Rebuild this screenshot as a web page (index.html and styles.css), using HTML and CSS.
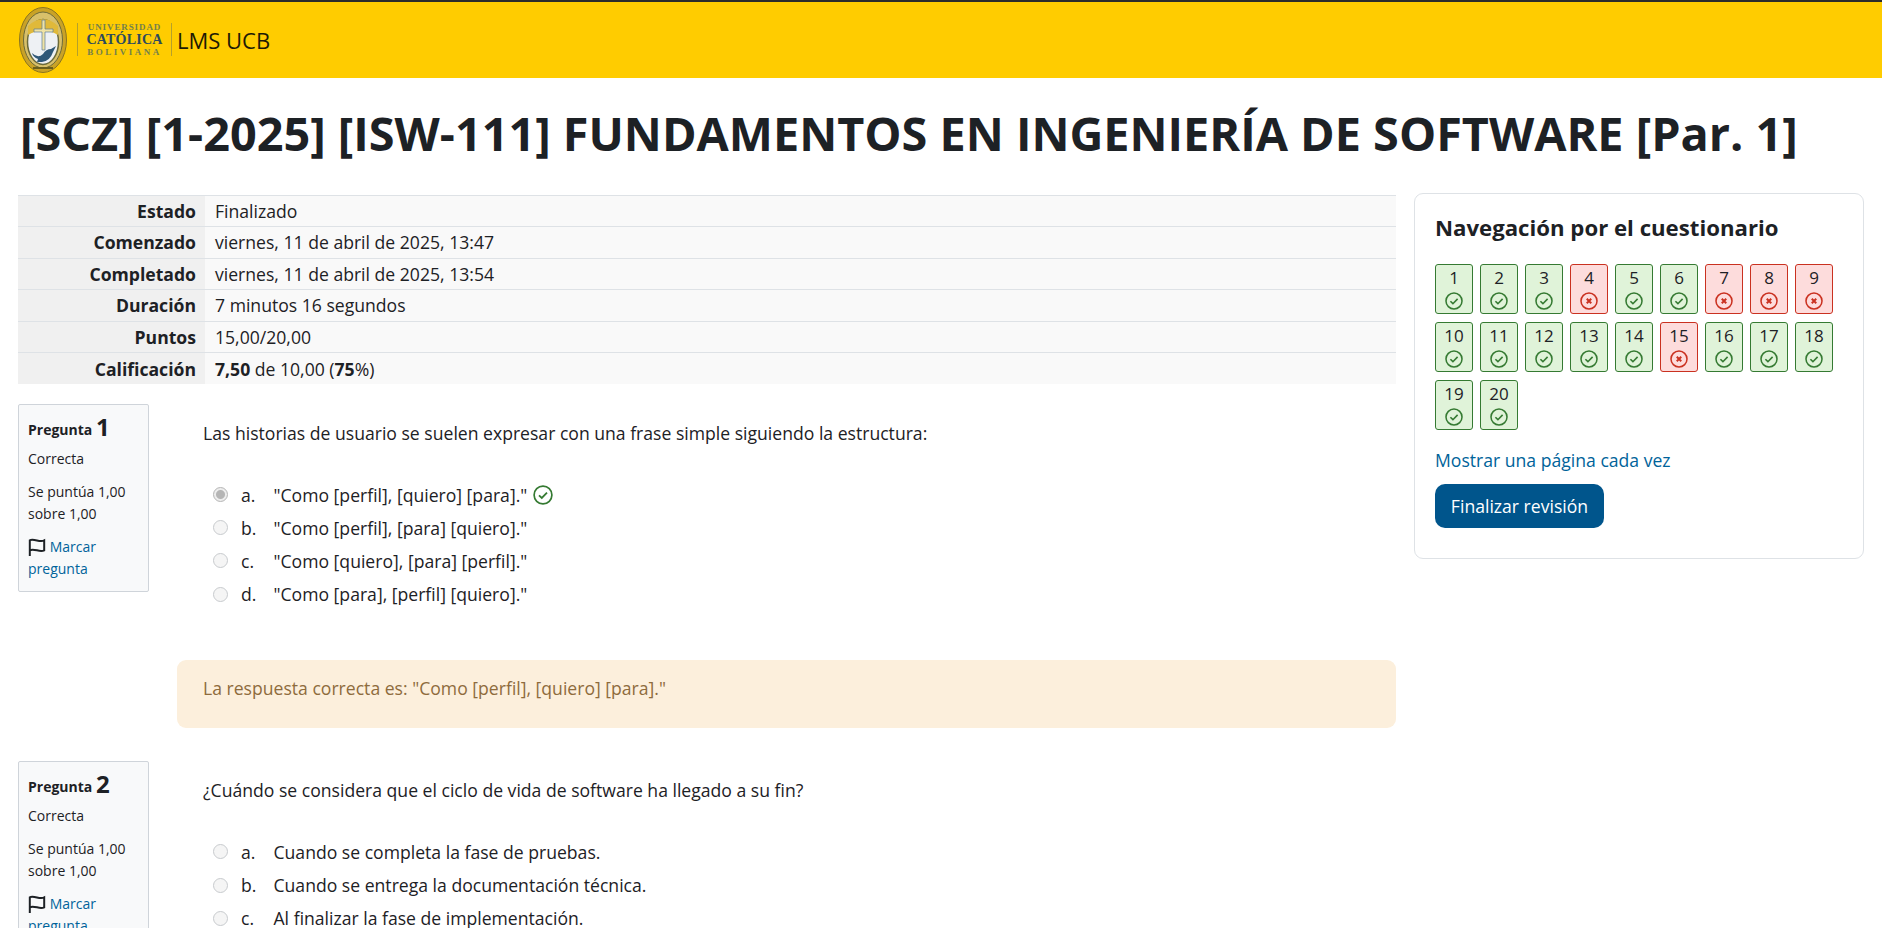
FILE: index.html
```html
<!DOCTYPE html>
<html lang="es">
<head>
  <meta charset="UTF-8">
  <title>LMS UCB</title>
  <link rel="stylesheet" href="styles.css">
</head>
<body>
  <svg class="icon-defs" width="0" height="0">
    <symbol id="ok" viewBox="0 0 20 20">
      <circle cx="10" cy="10" r="8.900" fill="none" stroke="currentColor" stroke-width="1.700"/>
      <path d="M6 10.300l2.800 2.700 5.200-5.300" fill="none" stroke="currentColor" stroke-width="1.800"/>
    </symbol>
    <symbol id="bad" viewBox="0 0 20 20">
      <circle cx="10" cy="10" r="8.900" fill="none" stroke="currentColor" stroke-width="1.700"/>
      <path d="M7.500 7.500l5 5M12.500 7.500l-5 5" fill="none" stroke="currentColor" stroke-width="2.200"/>
    </symbol>
    <symbol id="flag" viewBox="0 0 20 20">
      <path d="M2 20V2.500c2-1.200 4-.8 8 .2s6 1 8 0v11c-2 1-4 1-8 0s-6-1.300-8 0" fill="none" stroke="currentColor" stroke-width="2.200"/>
    </symbol>
  </svg>

  <header class="topbar">
    <svg class="seal" width="48" height="66" viewBox="0 0 48 66">
      <ellipse cx="24" cy="33" rx="23.500" ry="32.500" fill="#c9a227" stroke="#8a7420"/>
      <ellipse cx="24" cy="33" rx="19.500" ry="28" fill="#d8c06a" stroke="#6b6a3a"/>
      <ellipse cx="24" cy="35" rx="15.500" ry="22.500" fill="#eef1f4" stroke="#6b6a3a" stroke-width="1.500"/>
      <path d="M9 28q15-9 30 0V19q-15-14-30 0z" fill="#e0b93a"/>
      <path d="M23 13h3v9h8v3h-8v18h-3V25h-8v-3h8z" fill="#f0e3a4" stroke="#5d7c98" stroke-width=".7"/>
      <path d="M13 46q6 6 11 1 3-5 8-5l5-3-3 6q-3 9-11 10h-5l1-3q-5-2-6-6z" fill="#2f5878"/>
      <path d="M14 61h20" stroke="#6b5f1c" stroke-width="2"/>
    </svg>
    <span class="rule"></span>
    <div class="wordmark">
      <span class="wm-top">UNIVERSIDAD</span>
      <span class="wm-main">CATÓLICA</span>
      <span class="wm-bot">BOLIVIANA</span>
    </div>
    <span class="rule"></span>
    <span class="site-name">LMS UCB</span>
  </header>

  <h1 class="course-title">[SCZ] [1-2025] [ISW-111] FUNDAMENTOS EN INGENIERÍA DE SOFTWARE [Par. 1]</h1>

  <div class="page-grid">
    <main>
      <table class="summary">
        <tr><th>Estado</th><td>Finalizado</td></tr>
        <tr><th>Comenzado</th><td>viernes, 11 de abril de 2025, 13:47</td></tr>
        <tr><th>Completado</th><td>viernes, 11 de abril de 2025, 13:54</td></tr>
        <tr><th>Duración</th><td>7 minutos 16 segundos</td></tr>
        <tr><th>Puntos</th><td>15,00/20,00</td></tr>
        <tr><th>Calificación</th><td><b>7,50</b> de 10,00 (<b>75</b>%)</td></tr>
      </table>

      <section class="question">
        <aside class="q-info">
          <h3>Pregunta <span>1</span></h3>
          <p>Correcta</p>
          <p>Se puntúa 1,00 sobre 1,00</p>
          <a href="#"><svg class="flag"><use href="#flag"/></svg> Marcar pregunta</a>
        </aside>
        <div class="q-body">
          <p class="q-text">Las historias de usuario se suelen expresar con una frase simple siguiendo la estructura:</p>
          <ul class="answers">
            <li><span class="radio checked"></span><span class="letter">a.</span>"Como [perfil], [quiero] [para]."<svg class="ans-ok"><use href="#ok"/></svg></li>
            <li><span class="radio"></span><span class="letter">b.</span>"Como [perfil], [para] [quiero]."</li>
            <li><span class="radio"></span><span class="letter">c.</span>"Como [quiero], [para] [perfil]."</li>
            <li><span class="radio"></span><span class="letter">d.</span>"Como [para], [perfil] [quiero]."</li>
          </ul>
          <div class="feedback">La respuesta correcta es: "Como [perfil], [quiero] [para]."</div>
        </div>
      </section>

      <section class="question">
        <aside class="q-info">
          <h3>Pregunta <span>2</span></h3>
          <p>Correcta</p>
          <p>Se puntúa 1,00 sobre 1,00</p>
          <a href="#"><svg class="flag"><use href="#flag"/></svg> Marcar pregunta</a>
        </aside>
        <div class="q-body">
          <p class="q-text">¿Cuándo se considera que el ciclo de vida de software ha llegado a su fin?</p>
          <ul class="answers">
            <li><span class="radio"></span><span class="letter">a.</span>Cuando se completa la fase de pruebas.</li>
            <li><span class="radio"></span><span class="letter">b.</span>Cuando se entrega la documentación técnica.</li>
            <li><span class="radio"></span><span class="letter">c.</span>Al finalizar la fase de implementación.</li>
          </ul>
        </div>
      </section>
    </main>

    <aside class="nav-card">
      <h3>Navegación por el cuestionario</h3>
      <div class="nav-grid">
        <a class="qn ok">1<svg><use href="#ok"/></svg></a>
        <a class="qn ok">2<svg><use href="#ok"/></svg></a>
        <a class="qn ok">3<svg><use href="#ok"/></svg></a>
        <a class="qn bad">4<svg><use href="#bad"/></svg></a>
        <a class="qn ok">5<svg><use href="#ok"/></svg></a>
        <a class="qn ok">6<svg><use href="#ok"/></svg></a>
        <a class="qn bad">7<svg><use href="#bad"/></svg></a>
        <a class="qn bad">8<svg><use href="#bad"/></svg></a>
        <a class="qn bad">9<svg><use href="#bad"/></svg></a>
        <a class="qn ok">10<svg><use href="#ok"/></svg></a>
        <a class="qn ok">11<svg><use href="#ok"/></svg></a>
        <a class="qn ok">12<svg><use href="#ok"/></svg></a>
        <a class="qn ok">13<svg><use href="#ok"/></svg></a>
        <a class="qn ok">14<svg><use href="#ok"/></svg></a>
        <a class="qn bad">15<svg><use href="#bad"/></svg></a>
        <a class="qn ok">16<svg><use href="#ok"/></svg></a>
        <a class="qn ok">17<svg><use href="#ok"/></svg></a>
        <a class="qn ok">18<svg><use href="#ok"/></svg></a>
        <a class="qn ok">19<svg><use href="#ok"/></svg></a>
        <a class="qn ok">20<svg><use href="#ok"/></svg></a>
      </div>
      <a class="one-page" href="#">Mostrar una página cada vez</a>
      <button class="finish">Finalizar revisión</button>
    </aside>
  </div>
</body>
</html>
```

FILE: styles.css
```css
html, body {
  height: 928px;
  overflow: hidden;
}

body {
  margin: 0;
  font-family: "Open Sans", "Noto Sans", sans-serif;
  font-size: 17.6px;
  color: #1d2125;
  background-color: #fff;
}

a {
  color: #00639a;
  text-decoration: none;
}

.icon-defs {
  display: block;
  height: 0;
}

/* Top bar */
.topbar {
  height: 75.500px;
  background-color: #ffcc00;
  border-top: 2px solid #2b2b2b;
  display: flex;
  align-items: center;
  padding-left: 19px;
}

.seal {
  margin-right: 10px;
  flex: none;
}

.rule {
  width: 1px;
  height: 33px;
  background-color: #b5a02a;
}

.wordmark {
  display: flex;
  flex-direction: column;
  align-items: center;
  width: 93px;
  font-family: "Liberation Serif", serif;
  font-weight: bold;
  line-height: 12px;
}

.wm-top, .wm-bot {
  font-size: 9px;
  letter-spacing: .9px;
  color: #74804c;
}

.wm-bot {
  letter-spacing: 2.500px;
}

.wm-main {
  font-size: 14px;
  letter-spacing: .2px;
  line-height: 13px;
  color: #2c4a5e;
}

.site-name {
  margin-left: 5px;
  font-size: 22px;
  color: #1d1a05;
}

/* Title */
.course-title {
  margin: 0;
  padding: 32px 20px 0;
  height: 81px;
  font-size: 46.800px;
  line-height: 47px;
  font-weight: 700;
  white-space: nowrap;
}

/* Columns */
.page-grid {
  display: grid;
  grid-template-columns: 1378px 450px;
  column-gap: 18px;
  padding-left: 18px;
}

.summary {
  width: 100%;
  border-collapse: collapse;
  margin-top: 4px;
  margin-bottom: 20px;
}

.summary th, .summary td {
  height: 31.500px;
  padding: 0;
  border-top: 1px solid #dee2e6;
  box-sizing: border-box;
  font-size: 17.6px;
}

.summary th {
  width: 187px;
  padding-right: 9px;
  text-align: right;
  font-weight: 700;
  background-color: #f0f0f0;
}

.summary td {
  padding-left: 10px;
  background-color: #f9f9f9;
}

.summary b {
  font-weight: 700;
}

/* Questions */
.question {
  display: flex;
  margin-bottom: 33px;
}

.q-info {
  width: 131px;
  height: 188px;
  flex: none;
  box-sizing: border-box;
  padding: 7px 9px;
  background-color: #f8f9fa;
  border: 1px solid #cfd4da;
  border-radius: 2px;
  font-size: 14px;
  line-height: 22.500px;
}

.q-info h3 {
  margin: 0 0 3px;
  font-size: 14px;
  line-height: 30px;
  font-weight: 700;
}

.q-info h3 span {
  font-size: 24px;
  font-weight: 700;
  vertical-align: -1px;
}

.q-info p {
  margin: 0 0 10px;
}

.flag {
  width: 18px;
  height: 18px;
  color: #1d2125;
  vertical-align: -4px;
}

.q-body {
  margin-left: 28px;
  flex: 1;
}

.q-text {
  margin: 16px 0 0 26px;
  line-height: 27px;
}

.answers {
  list-style: none;
  margin: 31px 0 0 36px;
  padding: 0;
}

.answers li {
  height: 33.200px;
  display: flex;
  align-items: center;
}

.radio {
  width: 13px;
  height: 13px;
  flex: none;
  margin-right: 13px;
  border-radius: 50%;
  border: 1px solid #c8cbce;
  background-color: #f5f5f5;
}

.radio.checked {
  border-color: #b5b5b5;
  background: radial-gradient(circle, #b5b5b5 0 4px, #ededed 5px);
}

.letter {
  width: 32.500px;
}

.ans-ok {
  width: 20px;
  height: 20px;
  margin-left: 6px;
  color: #357a32;
}

.feedback {
  height: 68px;
  box-sizing: border-box;
  margin-top: 49.500px;
  padding: 15px 26px;
  background-color: #fcefdc;
  color: #8e6b3c;
  border-radius: 9px;
  line-height: 27px;
}

/* Navigation card */
.nav-card {
  height: 366px;
  box-sizing: border-box;
  margin-top: 2px;
  border: 1px solid #dee2e6;
  border-radius: 9px;
  padding: 19px 20px;
}

.nav-card h3 {
  margin: 0 0 21px;
  font-size: 22.200px;
  line-height: 30px;
  font-weight: 700;
}

.nav-grid {
  display: grid;
  grid-template-columns: repeat(9, 38px);
  grid-auto-rows: 50px;
  column-gap: 7px;
  row-gap: 8px;
}

.qn {
  box-sizing: border-box;
  display: flex;
  flex-direction: column;
  align-items: center;
  border: 1px solid;
  border-radius: 3px;
  font-size: 17px;
  line-height: 26px;
  color: #1d2125;
}

.qn svg {
  width: 18px;
  height: 18px;
  margin-top: 1px;
}

.qn.ok {
  background-color: #e0f3d9;
  border-color: #357a32;
}

.qn.ok svg {
  color: #357a32;
}

.qn.bad {
  background-color: #fddcdc;
  border-color: #ca3120;
}

.qn.bad svg {
  color: #ca3120;
}

.one-page {
  display: block;
  margin-top: 17px;
  line-height: 27px;
}

.finish {
  display: block;
  margin-top: 10px;
  width: 169px;
  height: 44px;
  border: none;
  border-radius: 10px;
  background-color: #00558c;
  color: #fff;
  font: inherit;
}
```
